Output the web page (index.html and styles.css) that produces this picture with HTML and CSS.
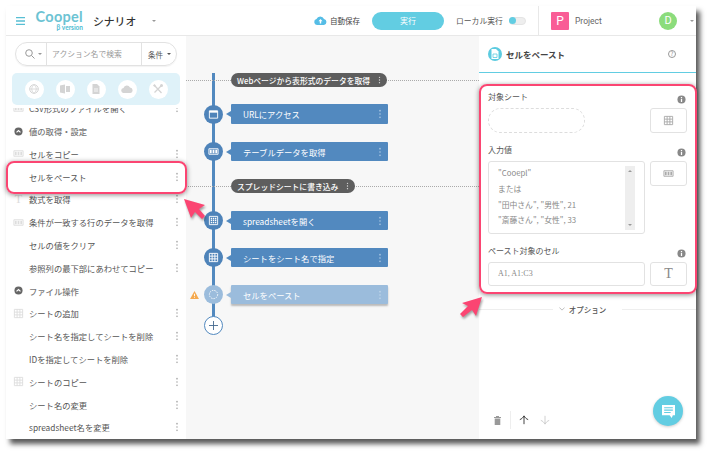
FILE: index.html
```html
<!DOCTYPE html>
<html lang="ja">
<head>
    <meta charset="UTF-8">
    <title>Coopel シナリオ</title>
    <link rel="stylesheet" href="styles.css">
</head>
<body>
    <!-- shared icons -->
    <svg class="sprite" width="0" height="0">
        <symbol id="i-kebab" viewBox="0 0 4 12"><circle cx="2" cy="2" r="1"/><circle cx="2" cy="6" r="1"/><circle cx="2" cy="10" r="1"/></symbol>
        <symbol id="i-table" viewBox="0 0 12 12"><path d="M1.5 1.5h9v9h-9zM1.5 4.5h9M1.5 7.5h9M4.5 1.5v9M7.5 1.5v9" fill="none" stroke="currentColor" stroke-width="1"/></symbol>
        <symbol id="i-strip" viewBox="0 0 12 12"><path d="M1 3h10v6H1z" fill="none" stroke="currentColor"/><path d="M2 4h2v4H2zM5 4h2v4H5zM8 4h2v4H8z" fill="currentColor"/></symbol>
        <symbol id="i-window" viewBox="0 0 12 12"><path d="M1.5 2h9v8h-9z" fill="none" stroke="currentColor"/><path d="M1.5 2h9v2h-9z" fill="currentColor"/></symbol>
        <symbol id="i-grid" viewBox="0 0 12 12"><path d="M1.5 1.5h9v9h-9z" fill="none" stroke="currentColor"/><path d="M3 3h1.5v1.5H3zM5.3 3h1.5v1.5H5.3zM7.6 3h1.5v1.5H7.6zM3 5.3h1.5v1.5H3zM5.3 5.3h1.5v1.5H5.3zM7.6 5.3h1.5v1.5H7.6zM3 7.6h1.5v1.5H3zM5.3 7.6h1.5v1.5H5.3zM7.6 7.6h1.5v1.5H7.6z" fill="currentColor"/></symbol>
        <symbol id="i-up" viewBox="0 0 12 12"><path d="M1 5.5C3 5 5 3 6 1c1 2 3 4 5 4.500M6 1.500V11" fill="none" stroke="currentColor" stroke-width="1.100"/></symbol>
        <symbol id="i-info" viewBox="0 0 10 10"><circle cx="5" cy="5" r="4.500" fill="currentColor"/><path d="M4.300 4.300h1.400v3.400H4.300zM4.300 2.200h1.400v1.200H4.300z" fill="#fff"/></symbol>
        <symbol id="i-open" viewBox="0 0 10 10"><circle cx="5" cy="5" r="4.500" fill="currentColor"/><path d="M2.800 6L5 3.900 7.200 6" fill="none" stroke="#fff" stroke-width="1.300"/></symbol>
    </svg>

    <div class="window">
        <!-- Header -->
        <div class="header">
            <svg class="burger" viewBox="0 0 9 8" width="9" height="8"><path d="M0 .7h9M0 4h9M0 7.300h9" stroke="#58bfd4" stroke-width="1.300"/></svg>
            <div class="logo">
                <span class="logo-name">Coopel</span>
                <span class="logo-sub">β version</span>
            </div>
            <div class="page-title">シナリオ</div>
            <span class="caret page-caret"></span>
            <div class="autosave">
                <svg viewBox="0 0 13 9" width="13" height="9"><path d="M3 9a3 3 0 0 1-.500-5.900A4 4 0 0 1 10 3.100 3 3 0 0 1 10 9z" fill="#55bde6"/><path d="M6.500 3L4.500 5.300h1.300V7.500h1.400V5.300h1.300z" fill="#fff"/></svg>
                <span>自動保存</span>
            </div>
            <button class="run-btn">実行</button>
            <div class="local-run">
                <span>ローカル実行</span>
                <span class="toggle"><span class="toggle-knob"></span></span>
            </div>
            <div class="project">
                <span class="project-mark">P</span>
                <span class="project-name">Project</span>
            </div>
            <span class="avatar">D</span>
            <span class="caret avatar-caret"></span>
        </div>

        <div class="main">
            <!-- Action list -->
            <div class="sidebar">
                <div class="search">
                    <div class="search-icon">
                        <svg viewBox="0 0 10 10" width="10" height="10"><circle cx="4" cy="4" r="3.300" fill="none" stroke="#999"/><path d="M6.500 6.500L9.500 9.500" stroke="#999"/></svg>
                        <span class="caret"></span>
                    </div>
                    <div class="search-input">アクション名で検索</div>
                    <div class="search-filter">条件<span class="caret dark"></span></div>
                </div>
                <div class="category-strip">
                    <span class="category"><svg viewBox="0 0 10 10" width="10" height="10"><circle cx="5" cy="5" r="4.300" fill="none" stroke="#d4d4d4"/><path d="M.7 5h8.600M5 .7c-3 2.500-3 6 0 8.600M5 .7c3 2.500 3 6 0 8.600" fill="none" stroke="#d4d4d4" stroke-width=".8"/></svg></span>
                    <span class="category"><svg viewBox="0 0 10 10" width="10" height="10"><path d="M0 1.500L5 .5v9l-5-1zM6 2h4v6H6z" fill="#d4d4d4"/></svg></span>
                    <span class="category"><svg viewBox="0 0 10 10" width="10" height="10"><path d="M1.500 0H6l2.500 2.500V10h-7z" fill="#d4d4d4"/><path d="M3 5h4M3 7h4" stroke="#fff" stroke-width=".8"/></svg></span>
                    <span class="category"><svg viewBox="0 0 12 8" width="12" height="8"><path d="M3 8a2.500 2.500 0 0 1-.500-5A3.500 3.500 0 0 1 9 2.500 2.800 2.800 0 0 1 9.500 8z" fill="#d4d4d4"/></svg></span>
                    <span class="category"><svg viewBox="0 0 10 10" width="10" height="10"><path d="M2 2l6.500 7M8 2L1.500 8.500" stroke="#d4d4d4" stroke-width="1.300"/><path d="M0 1.500L1.500 0 3 1.500 1.500 3zM7 1.500a1.500 1.500 0 0 1 3 0 1.500 1.500 0 0 1-3 0z" fill="#d4d4d4"/></svg></span>
                </div>
                <div class="action-list">
                    <div class="action-items">
                        <div class="action"><svg class="action-icon"><use href="#i-strip"/></svg>CSV形式のファイルを開く<svg class="kebab"><use href="#i-kebab"/></svg></div>
                        <div class="action group"><svg class="group-icon"><use href="#i-open"/></svg>値の取得・設定</div>
                        <div class="action"><svg class="action-icon"><use href="#i-strip"/></svg>セルをコピー<svg class="kebab"><use href="#i-kebab"/></svg></div>
                        <div class="action"><span class="action-title">セルをペースト</span><svg class="kebab"><use href="#i-kebab"/></svg></div>
                        <div class="action"><span class="action-icon t-icon">T</span>数式を取得<svg class="kebab"><use href="#i-kebab"/></svg></div>
                        <div class="action"><svg class="action-icon"><use href="#i-strip"/></svg>条件が一致する行のデータを取得<svg class="kebab"><use href="#i-kebab"/></svg></div>
                        <div class="action">セルの値をクリア<svg class="kebab"><use href="#i-kebab"/></svg></div>
                        <div class="action">参照列の最下部にあわせてコピー<svg class="kebab"><use href="#i-kebab"/></svg></div>
                        <div class="action group"><svg class="group-icon"><use href="#i-open"/></svg>ファイル操作</div>
                        <div class="action"><svg class="action-icon"><use href="#i-table"/></svg>シートの追加<svg class="kebab"><use href="#i-kebab"/></svg></div>
                        <div class="action">シート名を指定してシートを削除<svg class="kebab"><use href="#i-kebab"/></svg></div>
                        <div class="action">IDを指定してシートを削除<svg class="kebab"><use href="#i-kebab"/></svg></div>
                        <div class="action"><svg class="action-icon"><use href="#i-table"/></svg>シートのコピー<svg class="kebab"><use href="#i-kebab"/></svg></div>
                        <div class="action">シート名の変更<svg class="kebab"><use href="#i-kebab"/></svg></div>
                        <div class="action">spreadsheet名を変更<svg class="kebab"><use href="#i-kebab"/></svg></div>
                    </div>
                </div>
            </div>

            <!-- Scenario canvas -->
            <div class="canvas">
                <div class="timeline"></div>
                <div class="label-row first">
                    <div class="step-label">Webページから表形式のデータを取得<svg class="kebab"><use href="#i-kebab"/></svg></div>
                </div>
                <div class="step step-first">
                    <span class="node"><svg><use href="#i-window"/></svg></span>
                    <div class="card">URLにアクセス<svg class="kebab"><use href="#i-kebab"/></svg></div>
                </div>
                <div class="step">
                    <span class="node"><svg><use href="#i-strip"/></svg></span>
                    <div class="card">テーブルデータを取得<svg class="kebab"><use href="#i-kebab"/></svg></div>
                </div>
                <div class="label-row">
                    <div class="step-label">スプレッドシートに書き込み<svg class="kebab"><use href="#i-kebab"/></svg></div>
                </div>
                <div class="step">
                    <span class="node"><svg><use href="#i-grid"/></svg></span>
                    <div class="card">spreadsheetを開く<svg class="kebab"><use href="#i-kebab"/></svg></div>
                </div>
                <div class="step">
                    <span class="node"><svg><use href="#i-table"/></svg></span>
                    <div class="card">シートをシート名で指定<svg class="kebab"><use href="#i-kebab"/></svg></div>
                </div>
                <div class="step pending">
                    <svg class="warning" viewBox="0 0 10 9" width="9" height="8"><path d="M5 0l5 9H0z" fill="#f5a94e"/><path d="M4.500 3h1v3h-1zM4.500 6.700h1v1h-1z" fill="#fff"/></svg>
                    <span class="node"><svg viewBox="0 0 12 12"><circle cx="6" cy="6" r="4.500" fill="none" stroke="#fff" stroke-dasharray="1.500 1.200"/></svg></span>
                    <div class="card">セルをペースト<svg class="kebab"><use href="#i-kebab"/></svg></div>
                </div>
                <span class="add-step"><svg viewBox="0 0 10 10" width="9" height="9"><path d="M5 0v10M0 5h10" stroke="#44698f" stroke-width="1"/></svg></span>
            </div>

            <!-- Settings panel -->
            <div class="panel">
                <div class="panel-title">
                    <span class="panel-icon"><svg viewBox="0 0 8 10" width="8" height="10"><path d="M.5 0H5l2.500 2.500V10h-7z" fill="#fff"/><path d="M2 5h4v3.500H2z" fill="none" stroke="#5ccbe0" stroke-width=".8"/></svg></span>
                    <span class="panel-name">セルをペースト</span>
                    <span class="help">?</span>
                </div>
                <div class="fields">
                    <div class="field">
                        <div class="field-label"><span>対象シート</span><svg class="info"><use href="#i-info"/></svg></div>
                        <div class="field-row">
                            <div class="field-main"><div class="drop-slot"></div></div>
                            <div class="type-btn"><svg><use href="#i-table"/></svg></div>
                        </div>
                    </div>
                    <div class="field">
                        <div class="field-label"><span>入力値</span><svg class="info"><use href="#i-info"/></svg></div>
                        <div class="field-row">
                            <div class="field-main text-box">
                                <div class="text-lines">
                                    <div>"Cooepl"</div>
                                    <div>または</div>
                                    <div>"田中さん", "男性", 21</div>
                                    <div>"斎藤さん", "女性", 33</div>
                                </div>
                                <div class="scroll-track"><span class="scroll-up"></span><span class="scroll-down"></span></div>
                            </div>
                            <div class="type-btn"><svg><use href="#i-strip"/></svg></div>
                        </div>
                    </div>
                    <div class="field">
                        <div class="field-label"><span>ペースト対象のセル</span><svg class="info"><use href="#i-info"/></svg></div>
                        <div class="field-row">
                            <div class="field-main text-input">A1, A1:C3</div>
                            <div class="type-btn type-text">T</div>
                        </div>
                    </div>
                </div>
                <div class="option-line">
                    <span class="option-rule"></span>
                    <span class="option-text"><svg viewBox="0 0 8 5" width="6" height="4"><path d="M.5.500L4 4 7.500.500" fill="none" stroke="#aaa"/></svg>オプション</span>
                    <span class="option-rule"></span>
                </div>
                <div class="panel-tools">
                    <svg class="tool-trash" viewBox="0 0 7 9" width="7" height="9"><path d="M0 1h7v1H0zM2 0h3v1H2zM.7 2.500h5.600V9H.7z" fill="#999"/></svg>
                    <span class="tool-sep"></span>
                    <svg class="tool-arrow"><use href="#i-up"/></svg>
                    <svg class="tool-arrow off"><use href="#i-up"/></svg>
                </div>
                <span class="chat-btn"><svg viewBox="0 0 12 12" width="13" height="13"><path d="M0 0h12v9.500H10L9 12 7 9.500H0z" fill="#fff"/><path d="M2 2.500h8M2 4.700h8M2 6.900h6" stroke="#62cde2" stroke-width="1"/></svg></span>
            </div>
        </div>

        <!-- Annotations on top of the screenshot -->
        <div class="mark mark-row"></div>
        <div class="mark mark-panel"></div>
        <svg class="arrows" viewBox="0 0 715 458" width="715" height="458">
            <path d="M184 199l21 6-6 4 6 7-3 3-7-7-4 6z"/>
            <path d="M482 297l-6 19-4-6-9 7-3-3 8-8-6-3z"/>
        </svg>
    </div>
</body>
</html>
```

FILE: styles.css
```css
* {
    box-sizing: border-box;
}

body {
    margin: 0;
    padding: 6px 19px 19px 6px;
    background-color: white;
    font-family: "Noto Sans CJK JP", "Noto Sans", sans-serif;
    font-size: 8.3px;
    color: #555;
    overflow: hidden;
}

.sprite {
    position: absolute;
}

.window {
    position: relative;
    width: 690px;
    height: 433px;
    background-color: white;
    display: flex;
    flex-direction: column;
    box-shadow: 4px 5px 5px rgba(0, 0, 0, 0.65);
}

.caret {
    display: inline-block;
    width: 0;
    height: 0;
    flex-shrink: 0;
    border-left: 2px solid transparent;
    border-right: 2px solid transparent;
    border-top: 2.500px solid #999;
}

.caret.dark {
    border-top-color: #555;
    margin-left: 4px;
}

.kebab {
    width: 4px;
    height: 10px;
    margin-left: auto;
    fill: #aaa;
    flex-shrink: 0;
}

/* Header */
.header {
    height: 30px;
    flex-shrink: 0;
    display: flex;
    align-items: center;
    border-bottom: 1px solid #e8e8e8;
    padding-left: 10px;
    white-space: nowrap;
}

.header > * {
    flex-shrink: 0;
}

.logo {
    margin-left: 11px;
    width: 47px;
    display: flex;
    flex-direction: column;
    align-items: flex-end;
    line-height: 1;
}

.logo-name {
    font-family: "Lato", sans-serif;
    font-size: 14.500px;
    font-weight: 700;
    letter-spacing: 0.300px;
    color: #6cc3d3;
}

.logo-sub {
    font-family: "Lato", sans-serif;
    font-size: 6.500px;
    font-weight: 700;
    color: #4fbcd2;
}

.page-title {
    margin-left: 10px;
    width: 43px;
    font-size: 10.800px;
    font-weight: 500;
    color: #333;
}

.page-caret {
    margin-left: 16px;
}

.autosave {
    margin-left: 158px;
    width: 58px;
    display: flex;
    align-items: center;
    gap: 3px;
    font-size: 7.500px;
    color: #444;
}

.run-btn {
    width: 72px;
    height: 18px;
    padding: 0;
    border: none;
    border-radius: 9px;
    background-color: #62cde2;
    color: white;
    font-family: inherit;
    font-size: 8px;
}

.local-run {
    margin-left: 12px;
    width: 70px;
    display: flex;
    align-items: center;
    gap: 6px;
    font-size: 7.800px;
    color: #555;
}

.toggle {
    width: 17px;
    height: 8px;
    border-radius: 4px;
    background-color: #eee;
    border: 1px solid #e4e4e4;
    display: flex;
    align-items: center;
}

.toggle-knob {
    width: 7px;
    height: 7px;
    border-radius: 50%;
    background-color: #62cde2;
    margin-left: -1px;
}

.project {
    margin-left: 12px;
    height: 29px;
    width: 121px;
    border-left: 1px solid #e8e8e8;
    padding-left: 12px;
    display: flex;
    align-items: center;
    gap: 6px;
}

.project-mark {
    width: 18px;
    height: 18px;
    border-radius: 1px;
    background-color: #f95d96;
    color: white;
    font-family: "Roboto", sans-serif;
    font-size: 12px;
    text-align: center;
    line-height: 18px;
}

.project-name {
    font-family: "Roboto", sans-serif;
    font-size: 8.500px;
    color: #666;
}

.avatar {
    width: 18px;
    height: 18px;
    border-radius: 50%;
    background-color: #8bdc7c;
    color: white;
    font-family: "Roboto", sans-serif;
    font-size: 11px;
    text-align: center;
    line-height: 18px;
}

.avatar-caret {
    margin-left: 13px;
}

/* Three columns */
.main {
    flex: 1;
    display: flex;
    min-height: 0;
}

/* Action list */
.sidebar {
    width: 180px;
    flex-shrink: 0;
    display: flex;
    flex-direction: column;
    padding-top: 6px;
}

.search {
    margin: 0 9px;
    height: 24px;
    border: 1px solid #e2e2e2;
    border-radius: 12px;
    display: flex;
    align-items: center;
    box-shadow: 0 1px 1px rgba(0, 0, 0, 0.05);
}

.search-icon {
    width: 31px;
    height: 100%;
    padding-left: 9px;
    display: flex;
    align-items: center;
    gap: 3px;
    border-right: 1px solid #e2e2e2;
}

.search-input {
    width: 95px;
    height: 100%;
    padding-left: 5px;
    line-height: 21px;
    font-size: 7.800px;
    color: #999;
    border-right: 1px solid #e2e2e2;
}

.search-filter {
    padding-left: 6px;
    font-size: 7.500px;
    color: #555;
    display: flex;
    align-items: center;
}

.category-strip {
    margin: 7px 6px 0;
    height: 32px;
    border-radius: 5px;
    background-color: #dff2f9;
    display: flex;
    justify-content: center;
    align-items: center;
    gap: 12px;
}

.category {
    width: 19px;
    height: 19px;
    border-radius: 50%;
    background-color: white;
    display: flex;
    align-items: center;
    justify-content: center;
}

.action-list {
    flex: 1;
    min-height: 0;
    margin-top: 3px;
    overflow: hidden;
}

.action-items {
    margin-top: -11.200px;
}

.action {
    height: 22.800px;
    padding: 0 7px 0 23px;
    position: relative;
    display: flex;
    align-items: center;
}

.action-icon {
    position: absolute;
    left: 7px;
    top: 6px;
    width: 11px;
    height: 11px;
    color: #ddd;
}

.t-icon {
    font-family: "Liberation Serif", serif;
    font-size: 12px;
    line-height: 11px;
    text-align: center;
}

.action.group {
    font-weight: 500;
    color: #777;
}

.group-icon {
    position: absolute;
    left: 8px;
    top: 7px;
    width: 9px;
    height: 9px;
    color: #666;
}

/* Scenario canvas */
.canvas {
    width: 293px;
    flex-shrink: 0;
    position: relative;
    background-color: #f7f7f7;
    padding: 37px 0 0 18px;
    display: flex;
    flex-direction: column;
    gap: 18px;
    color: white;
}

.timeline {
    position: absolute;
    left: 26px;
    top: 37px;
    width: 3px;
    height: 244px;
    background-color: #5289bf;
}

.label-row {
    height: 14px;
    padding-left: 27px;
    position: relative;
    display: flex;
}

.label-row::before {
    content: "";
    position: absolute;
    left: -18px;
    right: 0;
    top: 7px;
    border-top: 1px dotted #aaa;
}

.step-label {
    position: relative;
    height: 14px;
    padding: 0 6px;
    border-radius: 7px;
    background-color: #5e5e5e;
    display: flex;
    align-items: center;
    gap: 8px;
    font-size: 7.800px;
    font-weight: 500;
}

.step-label .kebab {
    fill: #ddd;
    width: 3px;
    height: 8px;
}

.step {
    position: relative;
    height: 19px;
    display: flex;
    align-items: center;
    gap: 8px;
}

.step-first {
    margin-top: -1px;
    height: 20px;
}

.node {
    position: relative;
    width: 19px;
    height: 19px;
    flex-shrink: 0;
    border-radius: 50%;
    background-color: #4e83b9;
    color: white;
    display: flex;
    align-items: center;
    justify-content: center;
}

.node svg {
    width: 11px;
    height: 11px;
}

.card {
    position: relative;
    width: 157px;
    height: 100%;
    border-radius: 1px;
    background-color: #5289bf;
    padding: 0 6px 0 12px;
    display: flex;
    align-items: center;
}

.card::before {
    content: "";
    position: absolute;
    left: -5px;
    top: 7px;
    border-top: 3px solid transparent;
    border-bottom: 3px solid transparent;
    border-right: 5px solid #5289bf;
}

.card .kebab {
    fill: #a9c6e2;
}

.pending .node {
    background-color: #9bbcdc;
}

.pending .card {
    background-color: #9bbcdc;
    box-shadow: 0 2px 2px rgba(0, 0, 0, 0.25);
}

.pending .card::before {
    border-right-color: #9bbcdc;
}

.pending .card .kebab {
    fill: #c0d5e9;
}

.warning {
    position: absolute;
    left: -14px;
    top: 6px;
}

.add-step {
    position: relative;
    width: 19px;
    height: 19px;
    margin-top: -6px;
    border-radius: 50%;
    border: 1px solid #5289bf;
    background-color: white;
    display: flex;
    align-items: center;
    justify-content: center;
}

/* Settings panel */
.panel {
    flex: 1;
    position: relative;
    display: flex;
    flex-direction: column;
    min-width: 0;
}

.panel-title {
    height: 37px;
    flex-shrink: 0;
    border-bottom: 1.500px solid #62cde2;
    padding: 0 20px 0 9px;
    display: flex;
    align-items: center;
    gap: 4px;
}

.panel-icon {
    width: 14px;
    height: 14px;
    border-radius: 50%;
    background-color: #5ccbe0;
    display: flex;
    align-items: center;
    justify-content: center;
}

.panel-name {
    font-size: 8.500px;
    font-weight: 700;
    color: #444;
}

.help {
    margin-left: auto;
    width: 8px;
    height: 8px;
    border: 1px solid #999;
    border-radius: 50%;
    font-size: 6px;
    line-height: 6px;
    text-align: center;
    color: #888;
}

.fields {
    padding: 18px 9px 0;
    display: flex;
    flex-direction: column;
    gap: 11px;
}

.field-label {
    height: 12px;
    margin-bottom: 5px;
    padding-right: 1px;
    display: flex;
    align-items: center;
    justify-content: space-between;
    font-size: 8px;
    line-height: 12px;
}

.info {
    width: 9px;
    height: 9px;
    margin-top: 4px;
    color: #888;
}

.field-row {
    display: flex;
    gap: 5px;
}

.field-main {
    width: 157px;
    flex-shrink: 0;
}

.drop-slot {
    width: 97px;
    height: 25px;
    border: 1px dashed #ddd;
    border-radius: 12.500px;
}

.type-btn {
    width: 37px;
    height: 25px;
    border: 1px solid #e2e2e2;
    border-radius: 3px;
    display: flex;
    align-items: center;
    justify-content: center;
    color: #aaa;
}

.type-btn svg {
    width: 11px;
    height: 11px;
}

.type-text {
    font-family: "Liberation Serif", serif;
    font-size: 14px;
    color: #888;
}

.text-box {
    height: 73px;
    border: 1px solid #e2e2e2;
    border-radius: 3px;
    padding: 3px 9px 3px 9px;
    display: flex;
    overflow: hidden;
}

.text-lines {
    flex: 1;
    font-size: 7.800px;
    line-height: 15.800px;
    color: #888;
}

.scroll-track {
    width: 10px;
    margin-top: 1px;
    background-color: #eee;
    display: flex;
    flex-direction: column;
    justify-content: space-between;
    align-items: center;
    padding: 4px 0;
}

.scroll-up,
.scroll-down {
    width: 0;
    height: 0;
    border-left: 2px solid transparent;
    border-right: 2px solid transparent;
}

.scroll-up {
    border-bottom: 2px solid #999;
}

.scroll-down {
    border-top: 2px solid #999;
}

.text-input {
    height: 24px;
    border: 1px solid #e2e2e2;
    border-radius: 3px;
    padding-left: 9px;
    font-family: "Liberation Serif", serif;
    font-size: 8px;
    line-height: 22px;
    color: #888;
}

.field:last-child .type-btn {
    height: 24px;
}

.option-line {
    margin-top: 18px;
    display: flex;
    align-items: center;
    height: 10px;
}

.option-rule {
    flex: 1;
    border-top: 1px solid #eee;
}

.option-text {
    padding: 0 16px 0 6px;
    display: flex;
    align-items: center;
    gap: 4px;
    font-size: 7.500px;
    font-weight: 500;
    color: #555;
}

.panel-tools {
    margin-top: auto;
    height: 20px;
    margin-bottom: 9px;
    padding-left: 15px;
    display: flex;
    align-items: center;
}

.tool-sep {
    height: 18px;
    margin: 0 8px 0 9px;
    border-left: 1px solid #eee;
}

.tool-arrow {
    width: 10px;
    height: 10px;
    margin-right: 11px;
    color: #333;
}

.tool-arrow.off {
    color: #ccc;
    transform: rotate(180deg);
}

.chat-btn {
    position: absolute;
    left: 174px;
    top: 360px;
    width: 30px;
    height: 30px;
    border-radius: 50%;
    background-color: #62cde2;
    box-shadow: 0 1px 3px rgba(0, 0, 0, 0.2);
    display: flex;
    align-items: center;
    justify-content: center;
}

/* Annotations */
.mark {
    position: absolute;
    border: 2px solid #fb4572;
    border-radius: 8px;
    box-shadow: 0 1px 5px rgba(0, 0, 0, 0.45);
}

.mark-row {
    left: 0;
    top: 155px;
    width: 181px;
    height: 33px;
}

.mark-panel {
    left: 473px;
    top: 78px;
    width: 218px;
    height: 210px;
}

.arrows {
    position: absolute;
    left: -6px;
    top: -6px;
    fill: #fb4572;
    filter: drop-shadow(1px 2px 1px rgba(0, 0, 0, 0.35));
    pointer-events: none;
}
```
